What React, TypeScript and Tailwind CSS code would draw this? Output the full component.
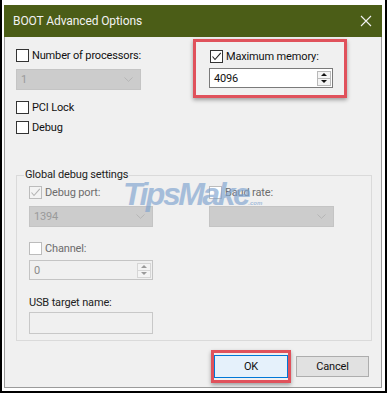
import React from "react";

const FONT = { fontFamily: 'Roboto, "Noto Sans", sans-serif' };
const TXT = "text-[11px] tracking-[-0.15px]";

function Check({ checked, disabled, white }: { checked?: boolean; disabled?: boolean; white?: boolean }) {
  const border = disabled ? "border-[#bcbcbc]" : "border-[#333333]";
  const bg = disabled && !white ? "bg-[#f3f3f3]" : "bg-white";
  return (
    <span className={`relative flex h-[13px] w-[13px] shrink-0 items-center justify-center border ${border} ${bg}`}>
      {checked && (
        <svg width="11" height="11" viewBox="0 0 11 11" className="absolute left-0 top-0">
          <polyline
            points="1.5,5.5 4,8.5 9.8,1.8"
            fill="none"
            stroke={disabled ? "#b4b4b4" : "#222"}
            strokeWidth="1.1"
          />
        </svg>
      )}
    </span>
  );
}

function CheckRow({ label, checked, disabled, white }: { label: string; checked?: boolean; disabled?: boolean; white?: boolean }) {
  return (
    <div className="flex h-[13px] items-center gap-[3px]">
      <Check checked={checked} disabled={disabled} white={white} />
      <span className={`${TXT} leading-[13px] ${disabled ? "text-[#6d6d6d]" : "text-[#111]"}`}>{label}</span>
    </div>
  );
}

function Chevron() {
  return (
    <svg width="9" height="5" viewBox="0 0 9 5">
      <polyline points="0.5,0.5 4.5,4.3 8.5,0.5" fill="none" stroke="#b5b5b5" strokeWidth="1" />
    </svg>
  );
}

function DisabledSelect({ value, width }: { value: string; width: string }) {
  return (
    <div className={`flex h-[21px] ${width} items-center justify-between border border-[#c4c4c4] bg-[#cccccc] pl-[4px] pr-[7px]`}>
      <span className={`${TXT} leading-none text-[#9a9a9a]`}>{value}</span>
      <Chevron />
    </div>
  );
}

function Spinner({ dim }: { dim?: boolean }) {
  const tri = dim ? "#9a9a9a" : "#111";
  return (
    <div className={`flex h-[15px] w-[14px] flex-col border ${dim ? "border-[#d6d6d6]" : "border-[#b9b9b9]"}`}>
      <div className={`flex flex-1 items-center justify-center border-b bg-[#f4f4f4] ${dim ? "border-[#d6d6d6]" : "border-[#b9b9b9]"}`}>
        <svg width="6" height="3" viewBox="0 0 6 3">
          <polygon points="0,3 3,0 6,3" fill={tri} />
        </svg>
      </div>
      <div className="flex flex-1 items-center justify-center bg-[#f4f4f4]">
        <svg width="6" height="3" viewBox="0 0 6 3">
          <polygon points="0,0 6,0 3,3" fill={tri} />
        </svg>
      </div>
    </div>
  );
}

export default function App() {
  return (
    <div style={FONT} className="h-[393px] w-[387px] border-x-2 border-b-2 border-black bg-white pl-[2px] pt-[5px]">
      <div className="flex h-[383px] w-[378px] flex-col">
        {/* Title bar */}
        <div className="flex h-[32px] shrink-0 items-center justify-between bg-[#4b5d17] pl-[9px] pr-[10px]">
          <span className="text-[12px] leading-none tracking-[-0.1px] text-[#f2f2f2]">BOOT Advanced Options</span>
          <svg width="12" height="12" viewBox="0 0 12 12">
            <path d="M1 1 L11 11 M11 1 L1 11" stroke="#f2f2f2" strokeWidth="1.1" />
          </svg>
        </div>

        {/* Body */}
        <div className="relative flex flex-1 flex-col border-x border-b border-[#9b9b9b] bg-[#f0f0f0] pl-[11px] pr-[12px]">
          {/* Top section */}
          <div className="flex items-start">
            <div className="mt-[12px] flex w-[177px] flex-col">
              <CheckRow label="Number of processors:" />
              <div className="mt-[7px]">
                <DisabledSelect value="1" width="w-[125px]" />
              </div>
              <div className="mt-[11px]">
                <CheckRow label="PCI Lock" />
              </div>
              <div className="mt-[7px]">
                <CheckRow label="Debug" />
              </div>
            </div>

            <div className="mt-[2px] h-[59px] w-[154px] border-[3px] border-[#e0525c] pl-[13px] pt-[8px] shadow-[0_2px_4px_rgba(0,0,0,0.35)]">
              <div className="ml-[1px]">
                <CheckRow label="Maximum memory:" checked />
              </div>
              <div className="mt-[5px] flex h-[20px] w-[124px] items-center justify-between border border-[#7a7a7a] bg-white pl-[4px] pr-[1px]">
                <span className={`${TXT} leading-none text-[#111]`}>4096</span>
                <Spinner />
              </div>
            </div>
          </div>

          {/* Group box */}
          <fieldset className="mt-[34px] h-[173px] w-[356px] border border-[#dadada] pl-[12px] pt-[4px]">
            <legend className={`-ml-[5px] px-[1px] ${TXT} leading-[14px] text-[#222]`}>Global debug settings</legend>
            <div className="grid grid-cols-[180px_1fr]">
              <div className="flex flex-col">
                <CheckRow label="Debug port:" checked disabled />
                <div className="mt-[7px]">
                  <DisabledSelect value="1394" width="w-[124px]" />
                </div>
                <div className="mt-[15px]">
                  <CheckRow label="Channel:" disabled white />
                </div>
                <div className="mt-[5px] flex h-[20px] w-[124px] items-center justify-between border border-[#c4c4c4] bg-[#f0f0f0] pl-[4px] pr-[1px]">
                  <span className={`${TXT} leading-none text-[#8a8a8a]`}>0</span>
                  <Spinner dim />
                </div>
                <div className={`mt-[16px] ${TXT} leading-[14px] text-[#222]`}>USB target name:</div>
                <div className="mt-[2px] h-[22px] w-[124px] border border-[#c8c8c8] bg-[#f0f0f0]" />
              </div>
              <div className="flex flex-col">
                <CheckRow label="Baud rate:" disabled white />
                <div className="mt-[7px]">
                  <DisabledSelect value="" width="w-[125px]" />
                </div>
              </div>
            </div>
          </fieldset>

          {/* Buttons */}
          <div className="mt-[9px] flex items-start justify-end gap-[5px]">
            <div className="border-[3px] border-[#e0525c] py-[2px] shadow-[0_2px_4px_rgba(0,0,0,0.35)]">
              <button className={`flex h-[23px] w-[74px] items-center justify-center border border-[#0078d7] bg-[#e5f1fb] ${TXT} leading-none text-[#111]`}>
                OK
              </button>
            </div>
            <button className={`mt-[6px] flex h-[21px] w-[73px] items-center justify-center border border-[#adadad] bg-[#e1e1e1] ${TXT} leading-none text-[#111]`}>
              Cancel
            </button>
          </div>

          {/* Watermark overlay */}
          <span
            className="pointer-events-none absolute left-[118px] top-[141px] select-none text-[32px] font-bold italic leading-none tracking-[-2.5px] text-[#7ea3cf] opacity-65"
            style={{ fontFamily: '"Liberation Sans", Arial, sans-serif' }}
          >
            TipsMake<span className="text-[6px] tracking-normal">.com</span>
          </span>
        </div>
      </div>
    </div>
  );
}
